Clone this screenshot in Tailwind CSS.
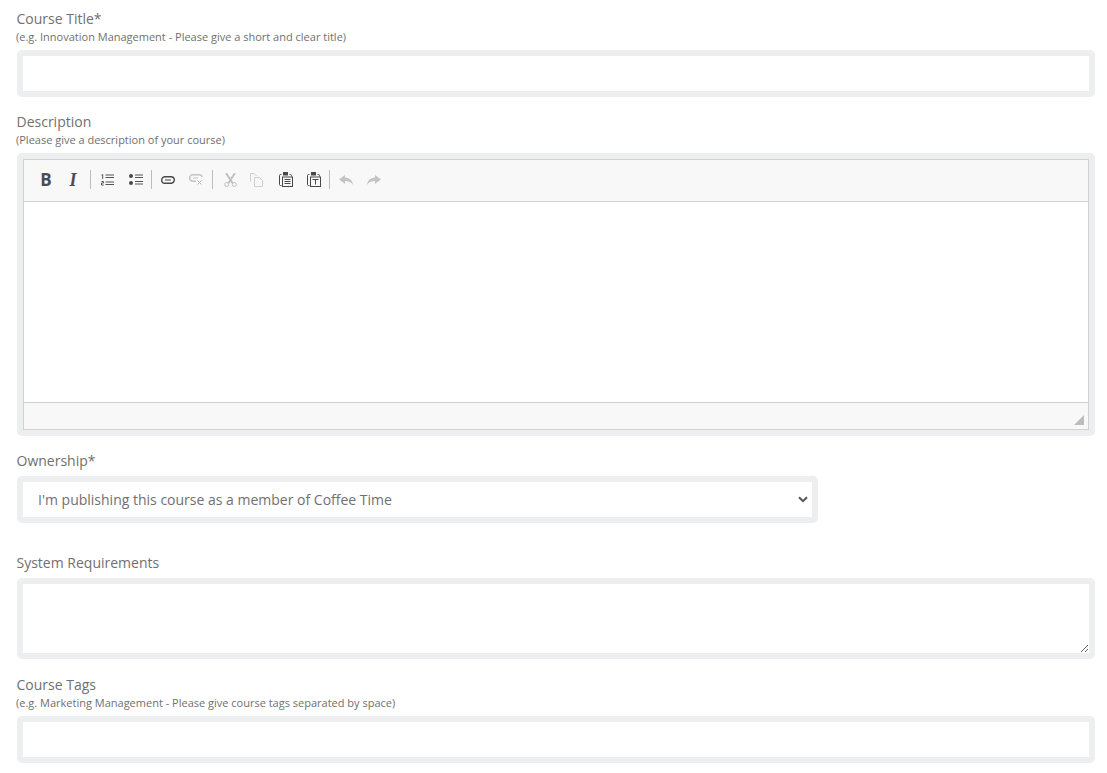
<!DOCTYPE html>
<html lang="en">
<head>
    <script src="https://cdn.jsdelivr.net/npm/@tailwindcss/browser@4"></script>
    <title>Course form</title>
</head>
<body class="bg-white font-['Open_Sans',sans-serif] text-[#707070]">
<form class="pl-[17px] pr-3 pt-[9px] h-[773px] overflow-hidden">
    <label class="block text-sm leading-[19px] -ml-[0.5px]">Course Title*</label>
    <p class="text-[11px] leading-[15px] mt-px mb-[6px] -ml-px">(e.g. Innovation Management - Please give a short and clear title)</p>
    <input type="text" class="block w-full h-[47px] bg-white border-[6px] border-[#eceeef] rounded-[5px] outline-none">

    <label class="block text-sm leading-[19px] mt-[15px] -ml-[0.5px]">Description</label>
    <p class="text-[11px] leading-[15px] mt-px mb-[6px] -ml-px">(Please give a description of your course)</p>
    <div class="border-[6px] border-[#eceeef] rounded-[5px] h-[283px]">
        <div class="border border-[#d1d1d1] h-full flex flex-col">
            <div class="h-[42px] bg-[#f8f8f8] border-b border-[#d1d1d1] flex items-center pl-[16px] pb-[2px] text-[#4c4c4c]">
                <span class="w-[12px] text-center text-[17px] font-bold leading-none">B</span>
                <span class="w-[10px] ml-[16px] text-center text-[18px] font-bold italic leading-none font-['Liberation_Serif',serif]">I</span>
                <span class="w-px h-[19px] bg-[#bcbcbc] ml-[12px]"></span>
                <svg class="ml-[10px]" width="13" height="12" viewBox="0 0 13 12" fill="none" stroke="#555"><path d="M.5 1.200l1.200-.7v4.500M.5 7.500h2v1.500h-2v2h2.200M4.500 1h8.500M4.500 3.500h8.500M4.500 8h8.500M4.500 10.500h8.500"/></svg>
                <svg class="ml-[15px]" width="14" height="11" viewBox="0 0 14 11" fill="none"><circle cx="2" cy="2" r="2" fill="#484848"/><circle cx="2" cy="9" r="2" fill="#484848"/><path d="M6 1h8M6 3.500h8M6 7.500h8M6 10h8" stroke="#555"/></svg>
                <span class="w-px h-[19px] bg-[#bcbcbc] ml-[8px]"></span>
                <svg class="ml-[9px]" width="14" height="8" viewBox="0 0 14 8" fill="none" stroke="#484848"><rect x=".7" y=".7" width="12.600" height="6.600" rx="3.300" stroke-width="1.400"/><path d="M4 4h6"/></svg>
                <svg class="ml-[14px]" width="14" height="11" viewBox="0 0 14 11" fill="none" stroke="#c4c4c4"><path d="M7 7.300H3.900a3.300 3.300 0 0 1 0-6.600h6.200a3.300 3.300 0 0 1 3.200 2.400" stroke-width="1.400"/><path d="M4 4h5"/><path d="M8.500 6.500l4 4M12.500 6.500l-4 4" stroke="#b4b4b4"/></svg>
                <span class="w-px h-[19px] bg-[#bcbcbc] ml-[9px]"></span>
                <svg class="ml-[11px]" width="13" height="14" viewBox="0 0 13 14" fill="none" stroke="#c0c0c0"><path d="M2 0l6.500 10M11 0L4.500 10" stroke-width="2"/><circle cx="2.700" cy="11.500" r="2"/><circle cx="10.300" cy="11.500" r="2"/></svg>
                <svg class="ml-[13px]" width="13" height="14" viewBox="0 0 13 14" fill="none" stroke="#cfcfcf"><path d="M.5 8.500v-8h3.500l2.500 2.500M4.500 4.500v9h8v-6l-3-3z"/></svg>
                <svg class="ml-[16px]" width="14" height="15" viewBox="0 0 14 15" fill="none" stroke="#484848"><path d="M2.500 2.500h-1a1 1 0 0 0-1 1v9a1 1 0 0 0 1 1h1M10.500 2.500h1a1 1 0 0 1 1 1v1"/><path d="M4 0h5v3.500H4z" fill="#484848" stroke="none"/><rect x="3.500" y="5" width="10" height="9.500" fill="#f8f8f8"/><path d="M5.500 7.500h6M5.500 9.500h6M5.500 11.500h6"/></svg>
                <svg class="ml-[14px]" width="14" height="15" viewBox="0 0 14 15" fill="none" stroke="#484848"><path d="M2.500 2.500h-1a1 1 0 0 0-1 1v9a1 1 0 0 0 1 1h1M10.500 2.500h1a1 1 0 0 1 1 1v1"/><path d="M4 0h5v3.500H4z" fill="#484848" stroke="none"/><rect x="3.500" y="5" width="10" height="9.500" fill="#f8f8f8"/><path d="M5.500 7.500h6M8.500 7.500v5"/></svg>
                <span class="w-px h-[19px] bg-[#bcbcbc] ml-[8px]"></span>
                <svg class="ml-[9px]" width="14" height="10" viewBox="0 0 14 10" fill="#c4c4c4"><path d="M6 0L0 4.500 6 9V6c3.500 0 6 1 8 4-.5-4.500-3-7-8-7.500z"/></svg>
                <svg class="ml-[14px]" width="14" height="10" viewBox="0 0 14 10" fill="#c4c4c4"><path d="M8 0l6 4.500L8 9V6c-3.500 0-6 1-8 4 .5-4.500 3-7 8-7.500z"/></svg>
            </div>
            <div class="flex-1 bg-white"></div>
            <div class="h-[27px] bg-[#f8f8f8] border-t border-[#d1d1d1] flex items-end justify-end pr-[4px] pb-[4px]">
                <span class="w-[10px] h-[10px] bg-[#bcbcbc] [clip-path:polygon(100%_0,100%_100%,0_100%)]"></span>
            </div>
        </div>
    </div>

    <label class="block text-sm leading-[19px] mt-[15px] -ml-[0.5px]">Ownership*</label>
    <div class="relative mt-[6px] w-[801px]">
        <select class="block w-full h-[47px] appearance-none bg-white border-[6px] border-[#eceeef] rounded-[5px] pl-[15px] pr-8 text-sm text-[#707070] outline-none">
            <option>I'm publishing this course as a member of Coffee Time</option>
        </select>
        <svg class="absolute right-[10px] top-[20px] pointer-events-none" width="10" height="7" viewBox="0 0 10 7" fill="none" stroke="#555" stroke-width="2"><path d="M1 1.200l4 4 4-4"/></svg>
    </div>

    <label class="block text-sm leading-[19px] mt-[30px] -ml-[0.5px]">System Requirements</label>
    <textarea class="block mt-[6px] w-full h-[81px] bg-white border-[6px] border-[#eceeef] rounded-[5px] outline-none"></textarea>

    <label class="block text-sm leading-[19px] mt-[16px] -ml-[0.5px]">Course Tags</label>
    <p class="text-[11px] leading-[15px] mt-px mb-[6px] -ml-px">(e.g. Marketing Management - Please give course tags separated by space)</p>
    <input type="text" class="block w-full h-[47px] bg-white border-[6px] border-[#eceeef] rounded-[5px] outline-none">
</form>
</body>
</html>
